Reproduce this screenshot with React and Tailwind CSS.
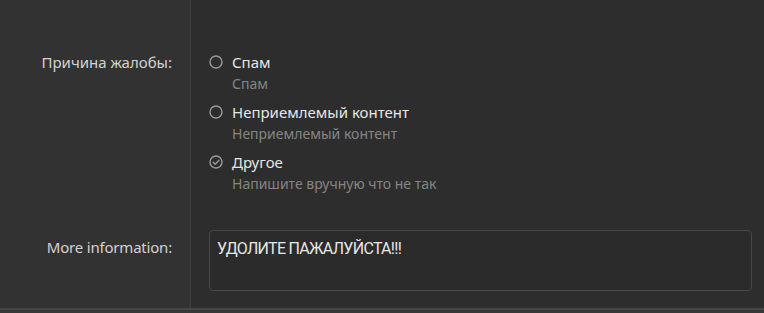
import React from "react";

const options = [
  { title: "Спам", desc: "Спам", checked: false },
  { title: "Неприемлемый контент", desc: "Неприемлемый контент", checked: false },
  { title: "Другое", desc: "Напишите вручную что не так", checked: true },
];

function RadioMark({ checked }) {
  return (
    <svg width="14" height="14" viewBox="0 0 14 14" className="shrink-0">
      <circle cx="7" cy="7" r="6" fill="none" stroke="#9a9a9a" strokeWidth="1.4" />
      {checked && (
        <path d="M4.2 7.2l2 2 3.8-4" fill="none" stroke="#9a9a9a" strokeWidth="1.4" strokeLinecap="round" strokeLinejoin="round" />
      )}
    </svg>
  );
}

export default function App() {
  return (
    <div className="w-[764px] h-[313px] flex flex-col bg-[#2d2d2d] overflow-hidden" style={{ fontFamily: '"Noto Sans", "Open Sans", sans-serif' }}>
      <div className="flex-1 grid grid-cols-[191px_1fr]">
        <div className="bg-[#323232] border-r border-[#3e3e3e] flex flex-col">
          <div className="h-[51px]" />
          <div className="h-[179px] pr-[18px] text-right text-[15px] leading-[22px] text-[#d2d2d2]">Причина жалобы:</div>
          <div className="pr-[18px] text-right text-[15px] tracking-[-0.2px] leading-[22px] text-[#d2d2d2] pt-[6px]">More information:</div>
        </div>
        <div className="flex flex-col pl-[18px] pr-[12px]">
          <div className="h-[51px]" />
          <div className="h-[179px] flex flex-col gap-[7px]">
            {options.map((o) => (
              <div key={o.title} className="flex flex-col">
                <div className="flex items-center gap-[9px] h-[22px]">
                  <RadioMark checked={o.checked} />
                  <span className="text-[15px] text-[#e6e6e6]">{o.title}</span>
                </div>
                <div className="pl-[23px] text-[14px] leading-[21px] text-[#858585]">{o.desc}</div>
              </div>
            ))}
          </div>
          <div className="h-[61px] rounded-[4px] border border-[#474747] bg-[#2b2b2b] px-[7px] pt-[8px] text-[16px] leading-[20px] tracking-[-0.7px] text-[#e6e6e6] font-['Roboto',sans-serif]">
            УДОЛИТЕ ПАЖАЛУЙСТА!!!
          </div>
        </div>
      </div>
      <div className="h-[5px] border-t-2 border-[#454545] bg-[#383838]" />
    </div>
  );
}
